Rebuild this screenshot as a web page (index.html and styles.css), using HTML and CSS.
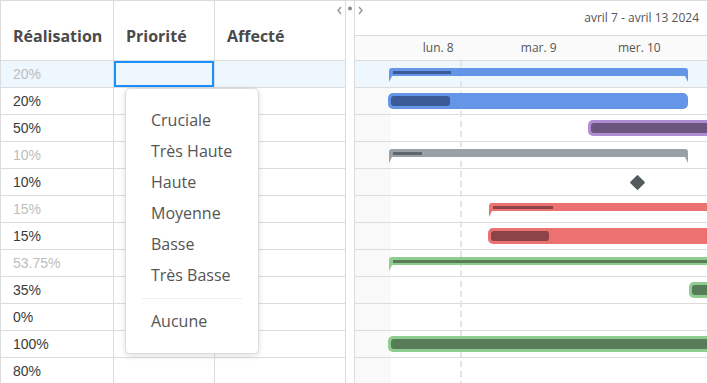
FILE: index.html
```html
<!DOCTYPE html>
<html lang="fr">
<head>
<meta charset="utf-8">
<title>Gantt</title>
<link rel="stylesheet" href="styles.css">
</head>
<body>
<div class="app">
  <div class="grid">
    <div class="hd">Réalisation</div><div class="hd">Priorité</div><div class="hd">Affecté</div>
    <div class="c sel muted">20%</div><div class="c sel focus"></div><div class="c sel"></div>
    <div class="c">20%</div><div class="c"></div><div class="c"></div>
    <div class="c">50%</div><div class="c"></div><div class="c"></div>
    <div class="c muted">10%</div><div class="c"></div><div class="c"></div>
    <div class="c">10%</div><div class="c"></div><div class="c"></div>
    <div class="c muted">15%</div><div class="c"></div><div class="c"></div>
    <div class="c">15%</div><div class="c"></div><div class="c"></div>
    <div class="c muted">53.75%</div><div class="c"></div><div class="c"></div>
    <div class="c">35%</div><div class="c"></div><div class="c"></div>
    <div class="c">0%</div><div class="c"></div><div class="c"></div>
    <div class="c">100%</div><div class="c"></div><div class="c"></div>
    <div class="c">80%</div><div class="c"></div><div class="c"></div>
  </div>
  <div class="splitter"></div>
  <div class="gantt">
    <div class="g-top">avril 7 - avril 13 2024</div>
    <div class="g-days"><span>lun. 8</span><span>mar. 9</span><span>mer. 10</span></div>
    <div class="g-body">
      <div class="today"></div>
      <div class="g-row sel">
        <div class="summary blue" style="left:34px;width:299px"><div class="line" style="width:58px"></div></div>
      </div>
      <div class="g-row">
        <div class="bar blue" style="left:33px;width:300px"><div class="prog" style="width:59px"></div></div>
      </div>
      <div class="g-row">
        <div class="bar purple" style="left:233px;width:200px"><div class="prog full"></div></div>
      </div>
      <div class="g-row">
        <div class="summary grey" style="left:34px;width:299px"><div class="line" style="width:29px"></div></div>
      </div>
      <div class="g-row">
        <div class="milestone" style="left:277px"></div>
      </div>
      <div class="g-row">
        <div class="summary red" style="left:134px;width:300px"><div class="line" style="width:60px"></div></div>
      </div>
      <div class="g-row">
        <div class="bar red" style="left:133px;width:300px"><div class="prog" style="width:58px"></div></div>
      </div>
      <div class="g-row">
        <div class="summary green" style="left:34px;width:400px"><div class="line" style="width:392px"></div></div>
      </div>
      <div class="g-row">
        <div class="bar green" style="left:334px;width:100px"><div class="prog full"></div></div>
      </div>
      <div class="g-row"></div>
      <div class="g-row">
        <div class="bar green" style="left:33px;width:400px"><div class="prog full"></div></div>
      </div>
      <div class="g-row"></div>
    </div>
  </div>
  <svg class="toggle" width="32" height="16" viewBox="0 0 32 16">
    <polyline points="7,5 4,8.5 7,12" fill="none" stroke="#9a9a9a" stroke-width="1.5"/>
    <circle cx="16" cy="6.5" r="2" fill="#8a8a8a"/>
    <polyline points="25,5 28,8.5 25,12" fill="none" stroke="#9a9a9a" stroke-width="1.5"/>
  </svg>
  <div class="menu">
    <div class="item">Cruciale</div>
    <div class="item">Très Haute</div>
    <div class="item">Haute</div>
    <div class="item">Moyenne</div>
    <div class="item">Basse</div>
    <div class="item">Très Basse</div>
    <div class="sep"></div>
    <div class="item">Aucune</div>
  </div>
</div>
</body>
</html>
```
FILE: styles.css
```css
* { box-sizing: border-box; }
html, body { margin: 0; padding: 0; background: #fff; }
body { width: 707px; height: 383px; overflow: hidden; }

.app {
  position: relative;
  display: flex;
  height: 383px;
  border-top: 1px solid #dcdcdc;
  overflow: hidden;
}

.grid {
  flex: 0 0 346px;
  display: grid;
  grid-template-columns: 113px 101px 131px;
  grid-template-rows: 60px;
  grid-auto-rows: 27px;
  border-left: 1px solid #dcdcdc;
  align-content: start;
}
.hd {
  border-right: 1px solid #dcdcdc;
  border-bottom: 1px solid #dcdcdc;
  padding: 25px 0 0 12px;
  font-family: "Open Sans", sans-serif;
  font-weight: 700;
  font-size: 16px;
  line-height: 20px;
  color: #4a4a4a;
  white-space: nowrap;
}
.c {
  border-right: 1px solid #dcdcdc;
  border-bottom: 1px solid #dcdcdc;
  padding-left: 12px;
  font-family: "Liberation Sans", Arial, sans-serif;
  font-size: 14px;
  line-height: 26px;
  color: #3a3a3a;
}
.c.muted { color: #bdbdbd; }
.c.sel { background: #eef6fe; }
.c.focus { box-shadow: inset 0 0 0 2px #1a8fff; }

.splitter {
  flex: 0 0 9px;
  border-right: 1px solid #dcdcdc;
}

.gantt {
  flex: 1;
  min-width: 0;
  overflow: hidden;
  font-family: "Open Sans", sans-serif;
  color: #555;
}
.g-top {
  height: 35px;
  border-bottom: 1px solid #dcdcdc;
  text-align: right;
  padding-right: 8px;
  font-size: 12px;
  line-height: 34px;
  white-space: nowrap;
}
.g-days {
  display: flex;
  height: 25px;
  border-bottom: 1px solid #dcdcdc;
  background: #fafafa;
  padding-left: 33px;
  font-size: 12px;
  line-height: 24px;
  white-space: nowrap;
}
.g-days span { flex: 0 0 100.5px; text-align: center; }

.g-body { position: relative; }
.today {
  position: absolute;
  left: 105px;
  top: 0;
  width: 2px;
  height: 330px;
  z-index: 1;
  background: repeating-linear-gradient(to bottom, #e4e4e4 0 6px, transparent 6px 10px);
}
.g-row {
  position: relative;
  height: 27px;
  border-bottom: 1px solid #dcdcdc;
  background: linear-gradient(to right, #f9f9f9 36px, transparent 36px);
}
.g-row.sel { background: #eef6fe; }

.blue { --main: #6595e6; --dark: #3b5b96; }
.grey { --main: #99a1a6; --dark: #5e666b; }
.red { --main: #ec7272; --dark: #8c4448; }
.purple { --main: #b08dd0; --dark: #6b5580; }
.green { --main: #8fcc8f; --dark: #587c58; }

.summary {
  position: absolute;
  top: 7px;
  height: 8px;
  z-index: 2;
  background: var(--main);
  border-radius: 3px 3px 0 0;
}
.summary::before, .summary::after {
  content: "";
  position: absolute;
  top: 8px;
  width: 0;
  height: 0;
  border-top: 6px solid var(--main);
}
.summary::before { left: 0; border-right: 3px solid transparent; }
.summary::after { right: 0; border-left: 3px solid transparent; }
.summary .line {
  position: absolute;
  left: 4px;
  top: 3px;
  height: 3px;
  background: var(--dark);
}

.bar {
  position: absolute;
  top: 5px;
  height: 16px;
  z-index: 2;
  background: var(--main);
  border-radius: 5px;
}
.bar .prog {
  position: absolute;
  left: 3px;
  top: 3px;
  bottom: 3px;
  background: var(--dark);
  border-radius: 3px;
}
.bar .prog.full { right: 3px; }

.milestone {
  position: absolute;
  top: 7.5px;
  width: 11px;
  height: 11px;
  z-index: 2;
  background: #545b5f;
  border-radius: 1px;
  transform: rotate(45deg);
}

.toggle {
  position: absolute;
  left: 334px;
  top: 1px;
}

.menu {
  position: absolute;
  left: 125px;
  top: 87px;
  width: 134px;
  height: 266px;
  padding: 16px 0 15px;
  background: #fff;
  border: 1px solid #dcdcdc;
  border-radius: 5px;
  box-shadow: 0 2px 6px rgba(0, 0, 0, 0.12);
  z-index: 5;
  font-family: "Open Sans", sans-serif;
  font-size: 16px;
  color: #555;
}
.item {
  height: 31px;
  line-height: 31px;
  padding-left: 25px;
  white-space: nowrap;
}
.sep {
  height: 1px;
  margin: 7px 16px;
  background: #eeeeee;
}
```
